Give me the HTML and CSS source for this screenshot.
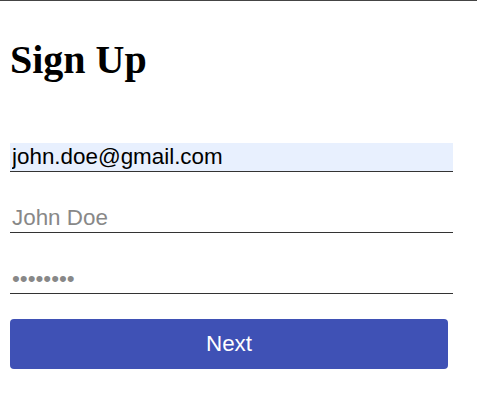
FILE: index.html
```html
<!DOCTYPE html>
<html>
<head>
<meta charset="utf-8">
<link rel="stylesheet" href="styles.css">
</head>
<body>
<div class="page">
  <h1 class="title">Sign Up</h1>
  <form class="form">
    <input class="field field-filled" type="email" value="john.doe@gmail.com">
    <input class="field" type="text" placeholder="John Doe">
    <input class="field" type="password" placeholder="••••••••">
    <button class="next" type="button">Next</button>
  </form>
</div>
</body>
</html>
```
FILE: styles.css
```css
html, body {
  margin: 0;
  padding: 0;
  background: #fff;
}
.page {
  border-top: 1px solid #444;
  padding: 0 24px 0 10px;
}
.title {
  font-family: "Liberation Serif", serif;
  font-weight: bold;
  font-size: 40px;
  line-height: 44px;
  margin: 37px 0 61px 0;
  color: #000;
}
.form {
  display: flex;
  flex-direction: column;
  width: 443px;
}
.field {
  box-sizing: border-box;
  height: 29px;
  margin: 0 0 32px 0;
  padding: 0 2px;
  border: none;
  border-bottom: 1px solid #333;
  font-family: "Liberation Sans", Arial, sans-serif;
  font-size: 22.4px;
  color: #000;
  background: #fff;
  outline: none;
}
.field-filled {
  background: #e8f0fe;
}
.field::placeholder {
  color: #888;
}
.field:nth-child(3) {
  margin-bottom: 25px;
}
.next {
  width: 438px;
  height: 50px;
  border: none;
  border-radius: 4px;
  background: #3f51b5;
  color: #fff;
  font-family: "Liberation Sans", Arial, sans-serif;
  font-size: 22.4px;
  cursor: pointer;
}
```
